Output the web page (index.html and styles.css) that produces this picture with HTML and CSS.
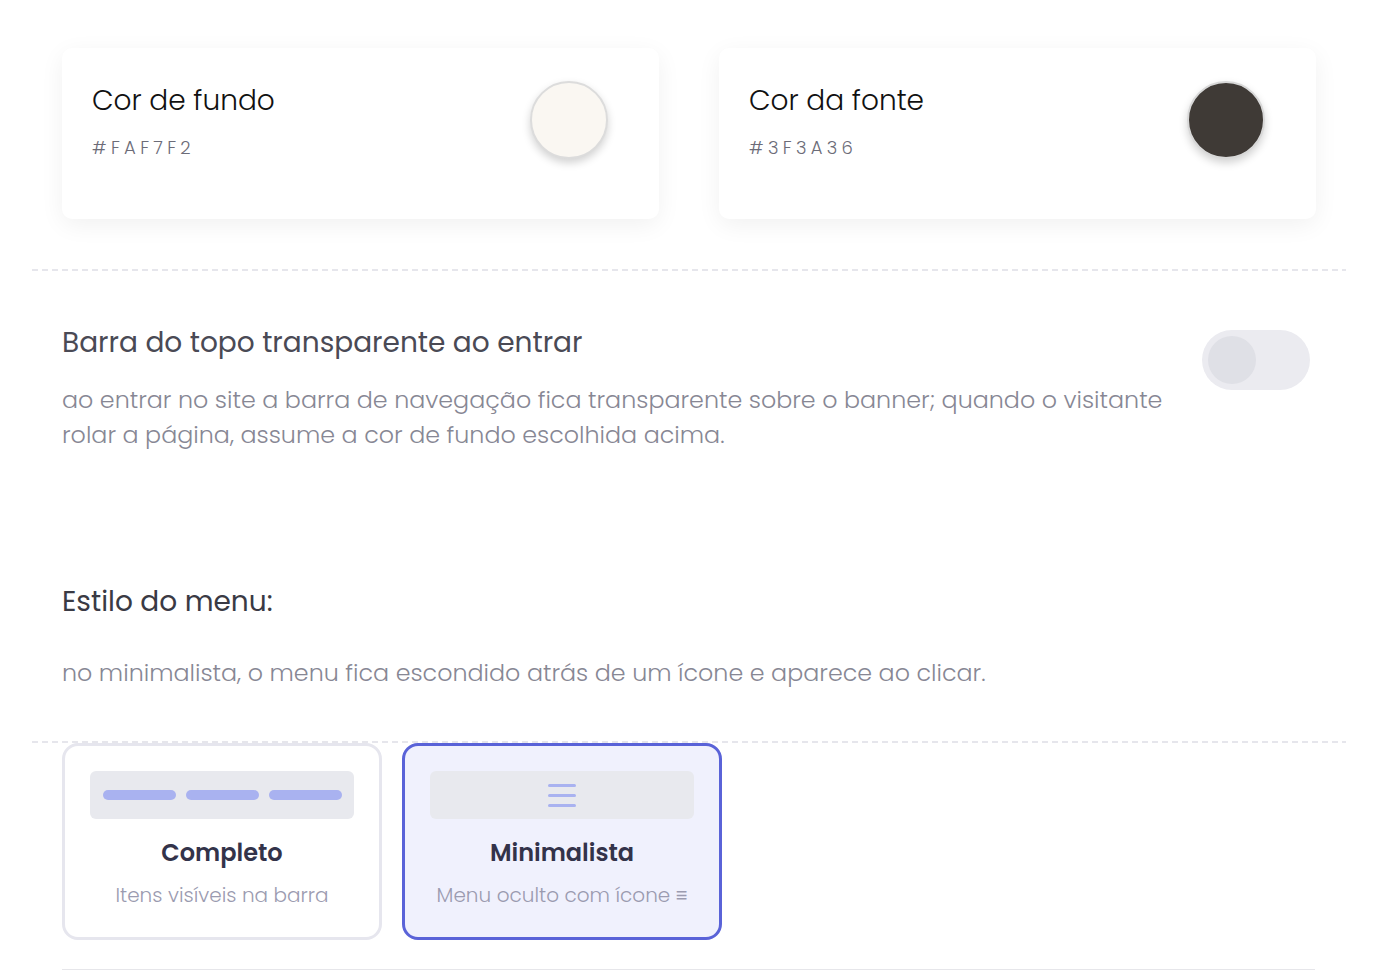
FILE: index.html
```html
<!DOCTYPE html>
<html lang="pt">
<head>
<meta charset="utf-8">
<title>Configurações do menu</title>
<link rel="stylesheet" href="styles.css">
</head>
<body>
<main class="page">
  <section class="colors">
    <div class="color-card">
      <div class="color-info">
        <div class="color-title">Cor de fundo</div>
        <div class="color-hex">#FAF7F2</div>
      </div>
      <div class="swatch swatch-light"></div>
    </div>
    <div class="color-card">
      <div class="color-info">
        <div class="color-title">Cor da fonte</div>
        <div class="color-hex">#3F3A36</div>
      </div>
      <div class="swatch swatch-dark"></div>
    </div>
  </section>
  <div class="dash"></div>
  <section class="toggle-row">
    <div class="toggle-text">
      <h2 class="row-title">Barra do topo transparente ao entrar</h2>
      <p class="row-desc">ao entrar no site a barra de navegação fica transparente sobre o banner; quando o visitante rolar a página, assume a cor de fundo escolhida acima.</p>
    </div>
    <div class="switch"><div class="knob"></div></div>
  </section>
  <section class="menu-style">
    <h2 class="row-title dark">Estilo do menu:</h2>
    <p class="row-desc">no minimalista, o menu fica escondido atrás de um ícone e aparece ao clicar.</p>
  </section>
  <div class="dash"></div>
  <section class="options">
    <div class="option">
      <div class="preview">
        <span class="bar"></span><span class="bar"></span><span class="bar"></span>
      </div>
      <div class="option-title">Completo</div>
      <div class="option-sub">Itens visíveis na barra</div>
    </div>
    <div class="option selected">
      <div class="preview">
        <span class="burger"><i></i><i></i><i></i></span>
      </div>
      <div class="option-title">Minimalista</div>
      <div class="option-sub">Menu oculto com ícone ≡</div>
    </div>
  </section>
  <div class="bottom-line"></div>
</main>
</body>
</html>
```
FILE: styles.css
```css
* { box-sizing: border-box; }
html, body { margin: 0; padding: 0; background: #ffffff; }
body {
  font-family: "Poppins", "Open Sans", "Noto Sans", sans-serif;
  font-weight: 300;
  color: #111;
}
.page {
  width: 1314px;
  margin-left: 32px;
}
.colors {
  display: grid;
  grid-template-columns: 597px 597px;
  column-gap: 60px;
  padding: 48px 0 50px 30px;
}
.color-card {
  background: #fff;
  border-radius: 10px;
  box-shadow: 0 6px 24px rgba(0, 0, 0, 0.06);
  height: 171px;
  display: flex;
  justify-content: space-between;
  align-items: flex-start;
  padding: 33px 51px 0 30px;
}
.color-info { padding-top: 3px; }
.color-title {
  font-size: 28px;
  line-height: 34px;
  color: #111;
}
.color-hex {
  margin-top: 18px;
  font-size: 18px;
  line-height: 24px;
  letter-spacing: 4.3px;
  color: #6c6c78;
}
.swatch {
  width: 78px;
  height: 78px;
  border-radius: 50%;
  border: 2px solid #dcdcdc;
  box-shadow: 0 4px 8px rgba(0, 0, 0, 0.18);
}
.swatch-light { background: #FAF7F2; }
.swatch-dark { background: #3F3A36; border-color: #d8d8d8; }

.dash {
  height: 2px;
  background: repeating-linear-gradient(to right, #e6e6ec 0 6px, transparent 6px 10px);
}
.toggle-row {
  display: flex;
  align-items: flex-start;
  gap: 22px;
  padding: 54px 36px 0 30px;
}
.toggle-text { flex: 1; }
.row-title {
  margin: 0;
  font-size: 28px;
  line-height: 36px;
  font-weight: 400;
  color: #4a4a55;
}
.row-title.dark { color: #3a3a44; }
.row-desc {
  margin: 21px 0 0;
  font-size: 23.8px;
  line-height: 35px;
  color: #878794;
}
.switch {
  flex: none;
  width: 108px;
  height: 60px;
  margin-top: 5px;
  border-radius: 30px;
  background: #ebebf0;
  padding: 6px;
}
.knob {
  width: 48px;
  height: 48px;
  border-radius: 50%;
  background: #dfe0e6;
}
.menu-style {
  padding: 132px 0 51px 30px;
}
.menu-style .row-desc { margin-top: 35px; }

.options {
  display: flex;
  gap: 20px;
  padding-left: 30px;
}
.option {
  width: 320px;
  height: 197px;
  border: 3px solid #e6e6ee;
  border-radius: 16px;
  background: #fff;
  padding: 25px 25px 0;
  display: flex;
  flex-direction: column;
  align-items: center;
}
.option.selected {
  border-color: #5a63d8;
  background: #f0f1fd;
}
.preview {
  width: 264px;
  height: 48px;
  border-radius: 6px;
  background: #e8e9ee;
  display: flex;
  align-items: center;
  justify-content: center;
  gap: 10px;
}
.bar {
  width: 73px;
  height: 10px;
  border-radius: 5px;
  background: #a9b2f0;
}
.burger {
  display: flex;
  flex-direction: column;
  gap: 7px;
}
.burger i {
  display: block;
  width: 28px;
  height: 3px;
  border-radius: 2px;
  background: #a9b2f0;
}
.option-title {
  margin-top: 19px;
  font-size: 24px;
  line-height: 30px;
  font-weight: 600;
  color: #33334a;
}
.option-sub {
  margin-top: 14px;
  font-size: 20px;
  line-height: 26px;
  color: #9b9bb0;
}
.bottom-line {
  margin: 29px 31px 0 30px;
  height: 1px;
  background: #e6e6ea;
}
```
